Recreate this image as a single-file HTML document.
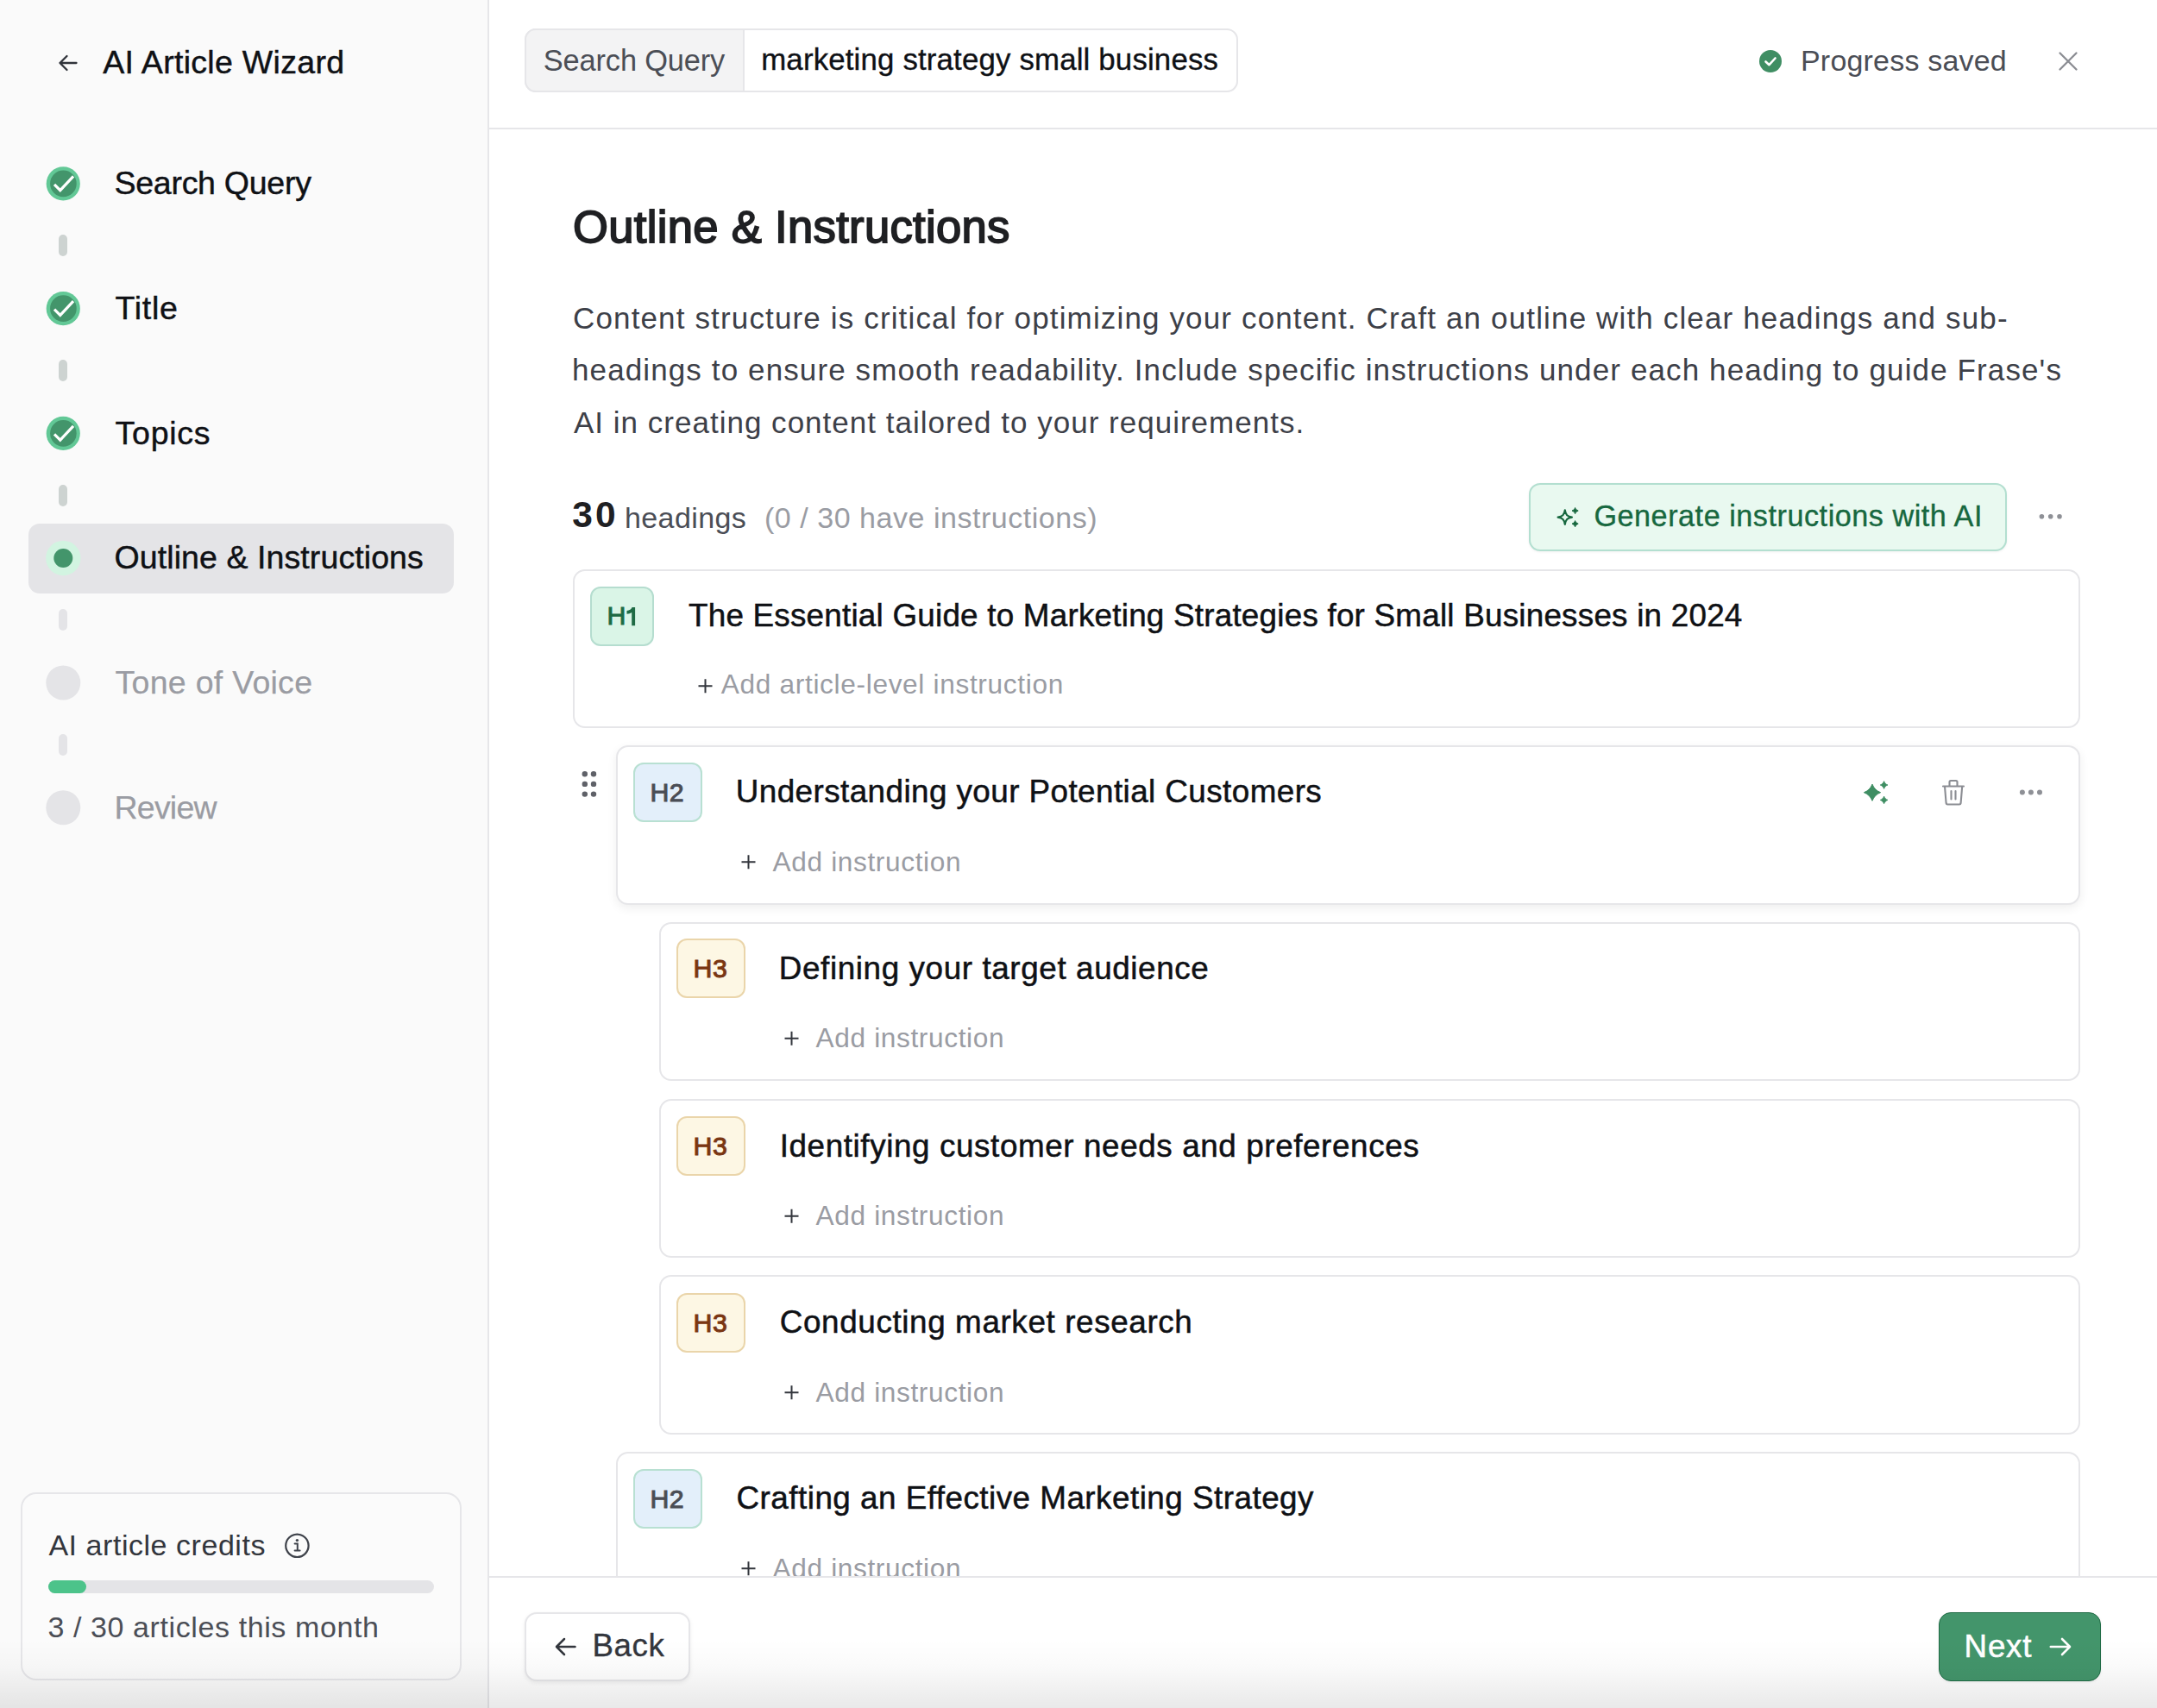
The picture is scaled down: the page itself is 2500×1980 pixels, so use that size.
<!DOCTYPE html>
<html><head><meta charset="utf-8"><title>AI Article Wizard</title>
<style>
html,body{margin:0;padding:0;}
body{width:2500px;height:1980px;position:relative;overflow:hidden;background:#fff;font-family:"Liberation Sans",sans-serif;}
.t{position:absolute;white-space:nowrap;line-height:1;}
.r{position:absolute;box-sizing:border-box;}
svg{position:absolute;left:0;top:0;overflow:visible;}
</style></head><body>
<div class="r" style="left:0px;top:0px;width:567px;height:1980px;background:#fafafa;border-right:2px solid #e6e6e9;"></div>
<div class="t" id="wiz" style="left:119.20px;top:53.76px;font-size:37.5px;color:#0f1115;letter-spacing:0.3px;font-weight:400;-webkit-text-stroke:0.45px #0f1115;">AI Article Wizard</div>
<div class="r" style="left:33px;top:607px;width:493px;height:81px;background:#e4e4e7;border-radius:13px;"></div>
<div class="t" id="step0" style="left:132.50px;top:194.06px;font-size:37.5px;color:#0f1115;letter-spacing:-0.27px;font-weight:400;-webkit-text-stroke:0.45px #0f1115;">Search Query</div>
<div class="r" style="left:68px;top:272.0px;width:10px;height:25.0px;background:#cdd3d1;border-radius:5px;"></div>
<div class="t" id="step1" style="left:133.60px;top:338.81px;font-size:37.5px;color:#0f1115;letter-spacing:0.7px;font-weight:400;-webkit-text-stroke:0.45px #0f1115;">Title</div>
<div class="r" style="left:68px;top:416.75px;width:10px;height:25.0px;background:#cdd3d1;border-radius:5px;"></div>
<div class="t" id="step2" style="left:133.60px;top:483.56px;font-size:37.5px;color:#0f1115;letter-spacing:0.74px;font-weight:400;-webkit-text-stroke:0.45px #0f1115;">Topics</div>
<div class="r" style="left:68px;top:561.5px;width:10px;height:25.0px;background:#cdd3d1;border-radius:5px;"></div>
<div class="t" id="step3" style="left:132.50px;top:628.31px;font-size:37.5px;color:#0f1115;letter-spacing:0.09px;font-weight:400;-webkit-text-stroke:0.45px #0f1115;">Outline &amp; Instructions</div>
<div class="r" style="left:68px;top:706.25px;width:10px;height:25.0px;background:#e4e4e7;border-radius:5px;"></div>
<div class="t" id="step4" style="left:133.60px;top:773.06px;font-size:37.5px;color:#9a9ca3;letter-spacing:0.27px;font-weight:400;-webkit-text-stroke:0.25px #9a9ca3;">Tone of Voice</div>
<div class="r" style="left:68px;top:851.0px;width:10px;height:25.0px;background:#e4e4e7;border-radius:5px;"></div>
<div class="t" id="step5" style="left:132.50px;top:917.81px;font-size:37.5px;color:#9a9ca3;letter-spacing:-0.78px;font-weight:400;-webkit-text-stroke:0.25px #9a9ca3;">Review</div>
<div class="r" style="left:24px;top:1730px;width:511px;height:218px;background:#fbfbfb;border:2px solid #e6e6e9;border-radius:18px;"></div>
<div class="t" id="cred" style="left:56.40px;top:1773.82px;font-size:34px;color:#33363d;letter-spacing:0.54px;font-weight:400;">AI article credits</div>
<div class="r" style="left:56px;top:1832px;width:447px;height:15px;background:#e4e4e7;border-radius:8px;"></div>
<div class="r" style="left:56px;top:1832px;width:44px;height:15px;background:#4cc38a;border-radius:8px;"></div>
<div class="t" id="month" style="left:55.40px;top:1868.92px;font-size:34px;color:#4b4e56;letter-spacing:0.6px;font-weight:400;">3 / 30 articles this month</div>
<div class="r" style="left:567px;top:148px;width:1933px;height:2px;background:#e6e6e9;"></div>
<div class="r" style="left:608px;top:33px;width:827px;height:74px;background:#fff;border:2px solid #e6e6e9;border-radius:13px;"></div>
<div class="r" style="left:608px;top:33px;width:255px;height:74px;background:#f3f3f4;border:2px solid #e6e6e9;border-right:2px solid #e6e6e9;border-radius:13px 0 0 13px;"></div>
<div class="t" id="sqlab" style="left:629.80px;top:52.88px;font-size:34.4px;color:#4b4e56;letter-spacing:-0.15px;font-weight:400;">Search Query</div>
<div class="t" id="query" style="left:882.20px;top:52.34px;font-size:34.8px;color:#0f1115;letter-spacing:0.175px;font-weight:400;-webkit-text-stroke:0.35px #0f1115;">marketing strategy small business</div>
<div class="t" id="prog" style="left:2087.00px;top:52.62px;font-size:34px;color:#4b4e56;letter-spacing:0.19px;font-weight:400;">Progress saved</div>
<div class="t" id="title" style="left:664.00px;top:236.77px;font-size:52.6px;color:#1f2023;letter-spacing:0.31px;font-weight:400;-webkit-text-stroke:1.8px #1f2023;">Outline &amp; Instructions</div>
<div class="t" id="p0" style="left:664.00px;top:351.07px;font-size:35px;color:#3d4048;letter-spacing:1.145px;font-weight:400;">Content structure is critical for optimizing your content. Craft an outline with clear headings and sub-</div>
<div class="t" id="p1" style="left:663.00px;top:411.32px;font-size:35px;color:#3d4048;letter-spacing:1.114px;font-weight:400;">headings to ensure smooth readability. Include specific instructions under each heading to guide Frase's</div>
<div class="t" id="p2" style="left:665.00px;top:471.57px;font-size:35px;color:#3d4048;letter-spacing:1.008px;font-weight:400;">AI in creating content tailored to your requirements.</div>
<div class="t" id="n30" style="left:663.20px;top:576.02px;font-size:42.5px;color:#1f2023;letter-spacing:3.3px;font-weight:700;">30</div>
<div class="t" id="hd" style="left:724.00px;top:583.02px;font-size:34px;color:#4b4e56;letter-spacing:0.39px;font-weight:400;">headings</div>
<div class="t" id="have" style="left:886.00px;top:583.02px;font-size:34px;color:#9a9ca3;letter-spacing:0.53px;font-weight:400;">(0 / 30 have instructions)</div>
<div class="r" style="left:1772px;top:560px;width:554px;height:79px;background:#e9f9f0;border:2px solid #b3dfd0;border-radius:13px;box-shadow:0 1px 3px rgba(0,0,0,0.06);"></div>
<div class="t" id="gen" style="left:1847.40px;top:580.85px;font-size:34.2px;color:#17683f;letter-spacing:0.53px;font-weight:400;-webkit-text-stroke:0.35px #17683f;">Generate instructions with AI</div>
<div class="r" style="left:663.5px;top:660px;width:1747.5px;height:183.60000000000002px;background:#fff;border:2px solid #e6e6e9;border-radius:14px;"></div>
<div class="r" style="left:684px;top:679.5px;width:74px;height:69.0px;background:#daf5e7;border:2px solid #b5ddcf;border-radius:12px;"></div>
<div class="t" id="b0" style="left:703.60px;top:699.15px;font-size:30.3px;color:#1e6b45;letter-spacing:0px;font-weight:400;-webkit-text-stroke:1.0px #1e6b45;">H</div>
<div class="t" id="ct0" style="left:798.00px;top:696.35px;font-size:36.8px;color:#0f1115;letter-spacing:0.234px;font-weight:400;-webkit-text-stroke:0.5px #0f1115;">The Essential Guide to Marketing Strategies for Small Businesses in 2024</div>
<div class="t" id="add0" style="left:835.80px;top:778.05px;font-size:31.6px;color:#9a9ca3;letter-spacing:0.675px;font-weight:400;">Add article-level instruction</div>
<div class="r" style="left:713.5px;top:864.2px;width:1697.5px;height:184.79999999999995px;background:#fff;border:2px solid #e6e6e9;border-radius:14px;box-shadow:0 4px 12px rgba(0,0,0,0.065);"></div>
<div class="r" style="left:734px;top:883.5px;width:80px;height:69.0px;background:#e3effa;border:2px solid #b8e0d2;border-radius:12px;"></div>
<div class="t" id="b1" style="left:753.60px;top:903.65px;font-size:30.3px;color:#4a4d55;letter-spacing:0.2px;font-weight:400;-webkit-text-stroke:1.0px #4a4d55;">H2</div>
<div class="t" id="ct1" style="left:852.80px;top:900.35px;font-size:36.8px;color:#0f1115;letter-spacing:0.44px;font-weight:400;-webkit-text-stroke:0.5px #0f1115;">Understanding your Potential Customers</div>
<div class="t" id="add1" style="left:895.60px;top:983.55px;font-size:31.6px;color:#9a9ca3;letter-spacing:0.64px;font-weight:400;">Add instruction</div>
<div class="r" style="left:763.5px;top:1068.6px;width:1647.5px;height:184.60000000000014px;background:#fff;border:2px solid #e6e6e9;border-radius:14px;"></div>
<div class="r" style="left:784px;top:1088px;width:80px;height:69px;background:#fdf7e4;border:2px solid #ead5aa;border-radius:12px;"></div>
<div class="t" id="b2" style="left:803.60px;top:1108.15px;font-size:30.3px;color:#7a3612;letter-spacing:0.6px;font-weight:400;-webkit-text-stroke:1.0px #7a3612;">H3</div>
<div class="t" id="ct2" style="left:902.80px;top:1104.85px;font-size:36.8px;color:#0f1115;letter-spacing:0.616px;font-weight:400;-webkit-text-stroke:0.5px #0f1115;">Defining your target audience</div>
<div class="t" id="add2" style="left:945.60px;top:1188.05px;font-size:31.6px;color:#9a9ca3;letter-spacing:0.64px;font-weight:400;">Add instruction</div>
<div class="r" style="left:763.5px;top:1274px;width:1647.5px;height:183.5999999999999px;background:#fff;border:2px solid #e6e6e9;border-radius:14px;"></div>
<div class="r" style="left:784px;top:1294px;width:80px;height:69px;background:#fdf7e4;border:2px solid #ead5aa;border-radius:12px;"></div>
<div class="t" id="b3" style="left:803.60px;top:1314.15px;font-size:30.3px;color:#7a3612;letter-spacing:0.6px;font-weight:400;-webkit-text-stroke:1.0px #7a3612;">H3</div>
<div class="t" id="ct3" style="left:903.70px;top:1310.85px;font-size:36.8px;color:#0f1115;letter-spacing:0.61px;font-weight:400;-webkit-text-stroke:0.5px #0f1115;">Identifying customer needs and preferences</div>
<div class="t" id="add3" style="left:945.60px;top:1394.05px;font-size:31.6px;color:#9a9ca3;letter-spacing:0.64px;font-weight:400;">Add instruction</div>
<div class="r" style="left:763.5px;top:1478.4px;width:1647.5px;height:184.5999999999999px;background:#fff;border:2px solid #e6e6e9;border-radius:14px;"></div>
<div class="r" style="left:784px;top:1498.5px;width:80px;height:69.0px;background:#fdf7e4;border:2px solid #ead5aa;border-radius:12px;"></div>
<div class="t" id="b4" style="left:803.60px;top:1518.65px;font-size:30.3px;color:#7a3612;letter-spacing:0.6px;font-weight:400;-webkit-text-stroke:1.0px #7a3612;">H3</div>
<div class="t" id="ct4" style="left:903.80px;top:1515.35px;font-size:36.8px;color:#0f1115;letter-spacing:0.63px;font-weight:400;-webkit-text-stroke:0.5px #0f1115;">Conducting market research</div>
<div class="t" id="add4" style="left:945.60px;top:1598.55px;font-size:31.6px;color:#9a9ca3;letter-spacing:0.64px;font-weight:400;">Add instruction</div>
<div class="r" style="left:713.5px;top:1682.9px;width:1697.5px;height:267.0999999999999px;background:#fff;border:2px solid #e6e6e9;border-radius:14px;"></div>
<div class="r" style="left:734px;top:1702.5px;width:80px;height:69.0px;background:#e3effa;border:2px solid #b8e0d2;border-radius:12px;"></div>
<div class="t" id="b5" style="left:753.60px;top:1722.65px;font-size:30.3px;color:#4a4d55;letter-spacing:0.2px;font-weight:400;-webkit-text-stroke:1.0px #4a4d55;">H2</div>
<div class="t" id="ct5" style="left:853.50px;top:1719.35px;font-size:36.8px;color:#0f1115;letter-spacing:0.494px;font-weight:400;-webkit-text-stroke:0.5px #0f1115;">Crafting an Effective Marketing Strategy</div>
<div class="t" id="add5" style="left:895.60px;top:1802.55px;font-size:31.6px;color:#9a9ca3;letter-spacing:0.64px;font-weight:400;">Add instruction</div>
<svg width="2500" height="1980" viewBox="0 0 2500 1980">
<path d="M88.5,73 H69.5 M77.5,65 L69.5,73 L77.5,81" fill="none" stroke="#30333a" stroke-width="2.3" stroke-linecap="round" stroke-linejoin="round"/>
<circle cx="73.25" cy="212.9" r="19.6" fill="#62c896"/><circle cx="73.4" cy="212.9" r="15.3" fill="#43956b"/>
<path d="M63,213.8 L69.8,220.6 L85,204.4" fill="none" stroke="#fff" stroke-width="3.2" stroke-linecap="butt" stroke-linejoin="miter"/>
<circle cx="73.25" cy="357.65" r="19.6" fill="#62c896"/><circle cx="73.4" cy="357.65" r="15.3" fill="#43956b"/>
<path d="M63,358.55 L69.8,365.35 L85,349.15" fill="none" stroke="#fff" stroke-width="3.2" stroke-linecap="butt" stroke-linejoin="miter"/>
<circle cx="73.25" cy="502.4" r="19.6" fill="#62c896"/><circle cx="73.4" cy="502.4" r="15.3" fill="#43956b"/>
<path d="M63,503.3 L69.8,510.1 L85,493.9" fill="none" stroke="#fff" stroke-width="3.2" stroke-linecap="butt" stroke-linejoin="miter"/>
<circle cx="73.3" cy="646.95" r="20.2" fill="#d2f4e1"/><circle cx="73.3" cy="646.95" r="11" fill="#43956b"/>
<circle cx="73.3" cy="791.5" r="20" fill="#e4e4e7"/>
<circle cx="73.3" cy="936.25" r="20" fill="#e4e4e7"/>
<circle cx="344.4" cy="1791.8" r="13.2" fill="none" stroke="#3f434b" stroke-width="2.2"/>
<circle cx="344.4" cy="1785.6" r="1.7" fill="#3f434b"/><path d="M341.6,1789.6 H344.8 V1797.6 M341.6,1797.6 H347.6" fill="none" stroke="#3f434b" stroke-width="2" stroke-linecap="round"/>
<circle cx="2052" cy="71" r="13" fill="#3f8e63"/><path d="M2046.5,71.5 L2050.5,75.2 L2057.5,67.5" fill="none" stroke="#fff" stroke-width="2.6" stroke-linecap="round" stroke-linejoin="round"/>
<path d="M2387.5,61.5 L2406.5,80.5 M2406.5,61.5 L2387.5,80.5" fill="none" stroke="#8b8d93" stroke-width="2.3" stroke-linecap="round"/>
<path d="M1813.8,591.4 C1814.7184,596.976 1816.424,598.6816 1822.0,599.6 C1816.424,600.5184 1814.7184,602.224 1813.8,607.8000000000001 C1812.8816,602.224 1811.176,600.5184 1805.6,599.6 C1811.176,598.6816 1812.8816,596.976 1813.8,591.4 Z" fill="none" stroke="#17683f" stroke-width="2.2" stroke-linejoin="round"/>
<path d="M1825.6,588.5 C1826.23,590.3000000000001 1827.3999999999999,591.47 1829.1999999999998,592.1 C1827.3999999999999,592.73 1826.23,593.9 1825.6,595.7 C1824.9699999999998,593.9 1823.8,592.73 1822.0,592.1 C1823.8,591.47 1824.9699999999998,590.3000000000001 1825.6,588.5 Z" fill="#17683f" stroke="#17683f" stroke-width="1"/>
<path d="M1825.6,603.6 C1826.23,605.4000000000001 1827.3999999999999,606.57 1829.1999999999998,607.2 C1827.3999999999999,607.83 1826.23,609.0 1825.6,610.8000000000001 C1824.9699999999998,609.0 1823.8,607.83 1822.0,607.2 C1823.8,606.57 1824.9699999999998,605.4000000000001 1825.6,603.6 Z" fill="#17683f" stroke="#17683f" stroke-width="1"/>
<circle cx="2366.4" cy="598.8" r="2.8" fill="#8e9096"/>
<circle cx="2376.7" cy="598.8" r="2.8" fill="#8e9096"/>
<circle cx="2387" cy="598.8" r="2.8" fill="#8e9096"/>
<path d="M736.1,725.3 V704.1 H732.6 Q731.2,707.4 726.5,708.1 V711.7 Q730.3,711.5 732.2,710.0 V725.3 Z" fill="#1e6b45"/>
<path d="M809.5,795.2 H825.5 M817.5,787.2 V803.2" fill="none" stroke="#33363d" stroke-width="2"/>
<path d="M859.5,999.2 H875.5 M867.5,991.2 V1007.2" fill="none" stroke="#33363d" stroke-width="2"/>
<path d="M909.5,1203.7 H925.5 M917.5,1195.7 V1211.7" fill="none" stroke="#33363d" stroke-width="2"/>
<path d="M909.5,1409.7 H925.5 M917.5,1401.7 V1417.7" fill="none" stroke="#33363d" stroke-width="2"/>
<path d="M909.5,1614.2 H925.5 M917.5,1606.2 V1622.2" fill="none" stroke="#33363d" stroke-width="2"/>
<path d="M859.5,1818.2 H875.5 M867.5,1810.2 V1826.2" fill="none" stroke="#33363d" stroke-width="2"/>
<circle cx="677.8" cy="897.2" r="3.2" fill="#5f6168"/>
<circle cx="677.8" cy="908.9" r="3.2" fill="#5f6168"/>
<circle cx="677.8" cy="920.6" r="3.2" fill="#5f6168"/>
<circle cx="688" cy="897.2" r="3.2" fill="#5f6168"/>
<circle cx="688" cy="908.9" r="3.2" fill="#5f6168"/>
<circle cx="688" cy="920.6" r="3.2" fill="#5f6168"/>
<path d="M2170,909.1 C2171.7472,913.7080000000001 2174.992,916.9528 2179.6,918.7 C2174.992,920.4472000000001 2171.7472,923.692 2170,928.3000000000001 C2168.2528,923.692 2165.008,920.4472000000001 2160.4,918.7 C2165.008,916.9528 2168.2528,913.7080000000001 2170,909.1 Z" fill="#3f8e63" stroke="#3f8e63" stroke-width="1" stroke-linejoin="round"/>
<path d="M2183.6,905.6 C2184.37,907.8 2185.7999999999997,909.23 2188.0,910 C2185.7999999999997,910.77 2184.37,912.2 2183.6,914.4 C2182.83,912.2 2181.4,910.77 2179.2,910 C2181.4,909.23 2182.83,907.8 2183.6,905.6 Z" fill="#3f8e63" stroke="#3f8e63" stroke-width="0.8"/>
<path d="M2183.6,923.0 C2184.37,925.1999999999999 2185.7999999999997,926.63 2188.0,927.4 C2185.7999999999997,928.17 2184.37,929.6 2183.6,931.8 C2182.83,929.6 2181.4,928.17 2179.2,927.4 C2181.4,926.63 2182.83,925.1999999999999 2183.6,923.0 Z" fill="#3f8e63" stroke="#3f8e63" stroke-width="0.8"/>
<path d="M2252,911.5 H2276 M2259.5,911.5 V906.5 Q2259.5,905 2261,905 H2267 Q2268.5,905 2268.5,906.5 V911.5 M2254,911.5 L2255.6,931 Q2255.8,932.5 2257.3,932.5 H2270.9 Q2272.4,932.5 2272.6,931 L2274.2,911.5 M2261.5,917 V926.5 M2266.5,917 V926.5" fill="none" stroke="#8b8d93" stroke-width="2.1" stroke-linecap="round" stroke-linejoin="round"/>
<circle cx="2343.9" cy="918.6" r="3" fill="#8e9096"/>
<circle cx="2353.9" cy="918.6" r="3" fill="#8e9096"/>
<circle cx="2364" cy="918.6" r="3" fill="#8e9096"/>
</svg><div class="r" style="left:567px;top:1827px;width:1933px;height:153px;background:#fff;border-top:2px solid #e6e6e9;"></div>
<div class="r" style="left:608px;top:1869px;width:192px;height:80px;background:#fff;border:2px solid #e6e6e9;border-radius:14px;box-shadow:0 2px 5px rgba(0,0,0,0.07);"></div>
<svg width="2500" height="1980" viewBox="0 0 2500 1980"><path d="M666.5,1909 H645 M654,1900 L645,1909 L654,1918" fill="none" stroke="#33363d" stroke-width="2.5" stroke-linecap="round" stroke-linejoin="round"/></svg><div class="t" id="back" style="left:686.60px;top:1889.63px;font-size:36.7px;color:#33363d;letter-spacing:0.53px;font-weight:400;-webkit-text-stroke:0.35px #33363d;">Back</div>
<div class="r" style="left:2247px;top:1869px;width:188px;height:80px;background:#43956b;border:1.5px solid #1f6b45;border-radius:14px;box-shadow:0 1px 3px rgba(0,0,0,0.08);"></div>
<div class="t" id="next" style="left:2276.60px;top:1890.93px;font-size:36.7px;color:#ffffff;letter-spacing:0.8px;font-weight:400;-webkit-text-stroke:0.55px #ffffff;">Next</div>
<svg width="2500" height="1980" viewBox="0 0 2500 1980"><path d="M2376.8,1909 H2399 M2390,1900 L2399,1909 L2390,1918" fill="none" stroke="#fff" stroke-width="2.6" stroke-linecap="round" stroke-linejoin="round"/></svg><div style="position:absolute;left:0;top:1900px;width:2500px;height:80px;background:linear-gradient(to bottom,rgba(0,0,0,0) 0%,rgba(0,0,0,0.02) 40%,rgba(0,0,0,0.085) 100%);pointer-events:none"></div></body></html>
